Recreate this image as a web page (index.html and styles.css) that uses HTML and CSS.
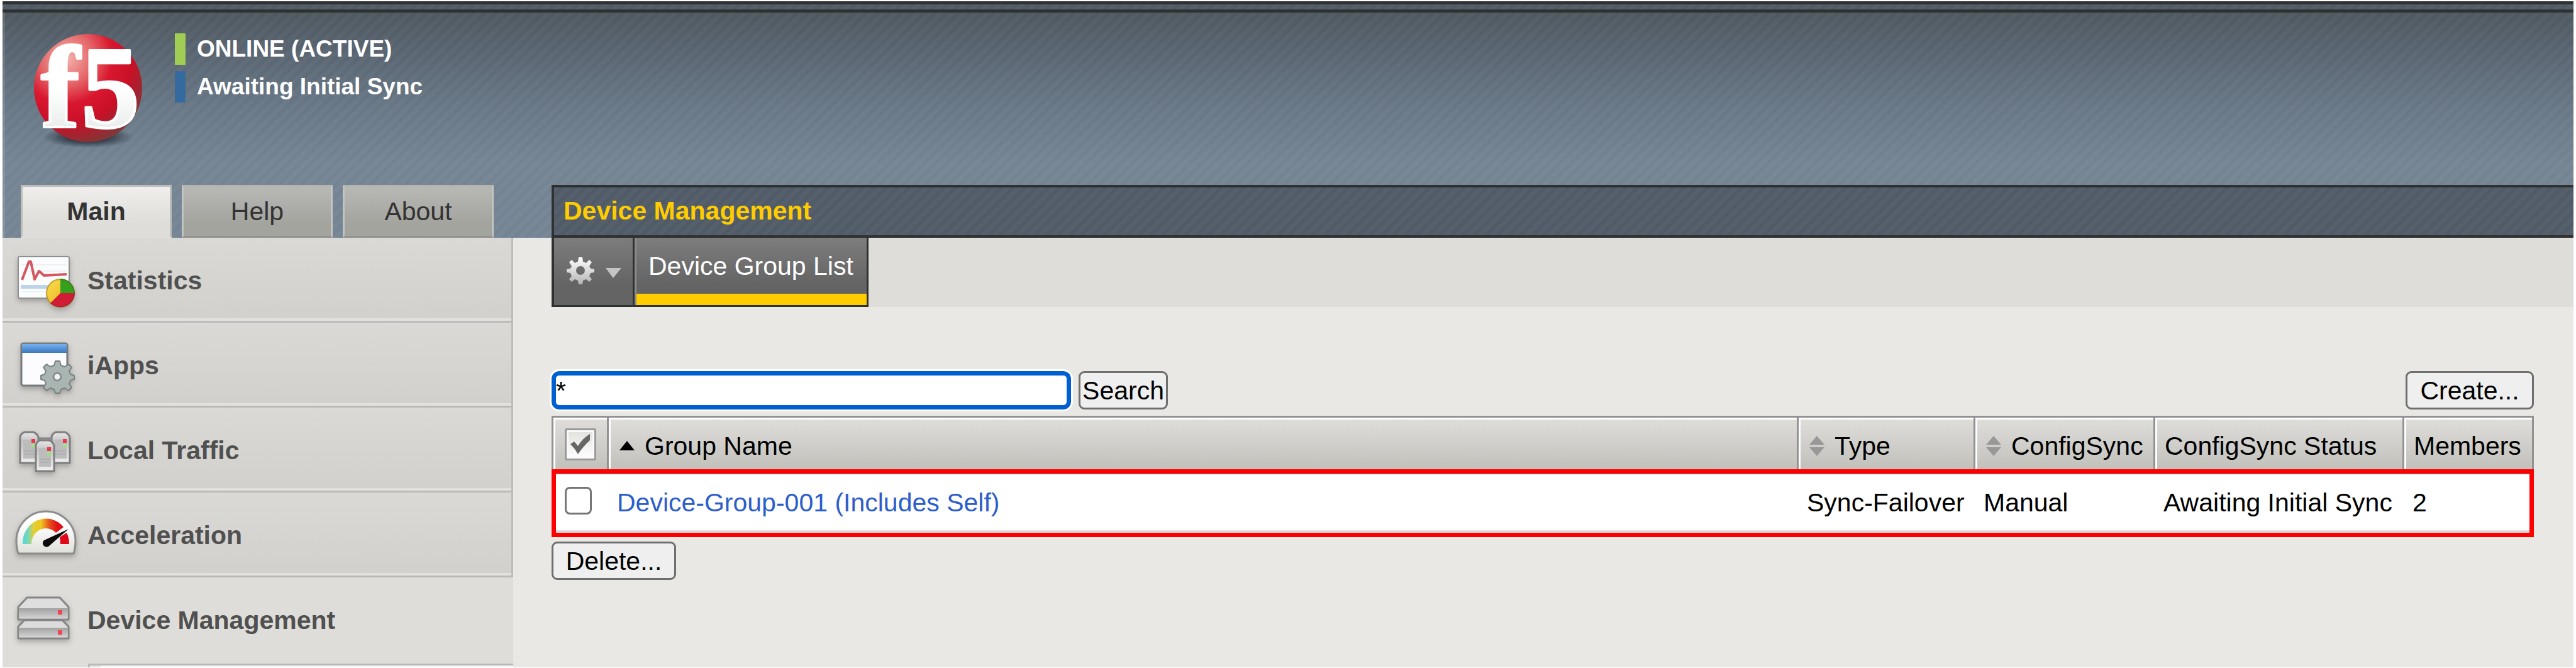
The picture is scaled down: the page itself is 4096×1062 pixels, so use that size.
FILE: index.html
```html
<!DOCTYPE html>
<html lang="en">
<head>
<meta charset="utf-8">
<title>Device Management</title>
<link rel="stylesheet" href="styles.css">
</head>
<body>
<div class="topline"></div>
<header class="banner">
  <div class="identity">
    <svg class="logo" viewBox="0 -24 180 220" role="img" aria-label="f5">
      <defs>
        <radialGradient id="ball" cx="0.3" cy="0.22" r="0.85">
          <stop offset="0" stop-color="#f3b5b0"/>
          <stop offset="0.28" stop-color="#e5686a"/>
          <stop offset="0.5" stop-color="#d9172f"/>
          <stop offset="0.72" stop-color="#c81027"/>
          <stop offset="1" stop-color="#7a3a3a"/>
        </radialGradient>
        <radialGradient id="ballshadow">
          <stop offset="0.4" stop-color="#26303a" stop-opacity="0.9"/>
          <stop offset="1" stop-color="#26303a" stop-opacity="0"/>
        </radialGradient>
        <linearGradient id="letters" x1="0" y1="0" x2="0" y2="1">
          <stop offset="0.5" stop-color="#ffffff"/>
          <stop offset="1" stop-color="#dfe3e3"/>
        </linearGradient>
      </defs>
      <ellipse cx="86" cy="165" rx="72" ry="17" fill="url(#ballshadow)"/>
      <circle cx="86" cy="87" r="86" fill="url(#ball)"/>
      <text class="logo-letter" x="11" y="149" font-size="186">f</text>
      <text class="logo-letter" x="75" y="149" font-size="186">5</text>
    </svg>
    <ul class="status">
      <li class="status-line online">ONLINE (ACTIVE)</li>
      <li class="status-line sync">Awaiting Initial Sync</li>
    </ul>
  </div>
  <div class="bannerfoot">
    <nav class="tabs">
      <button class="tab current" type="button">Main</button>
      <button class="tab" type="button">Help</button>
      <button class="tab" type="button">About</button>
    </nav>
    <h1 class="title">Device Management</h1>
  </div>
</header>
<div class="page">
  <nav class="sidebar">
    <a class="item" href="#statistics">
      <svg class="icon" viewBox="0 0 100 99" aria-hidden="true">
        <defs><linearGradient id="yel" x1="0" y1="0" x2="1" y2="1"><stop offset="0" stop-color="#fbe04a"/><stop offset="1" stop-color="#e8a820"/></linearGradient></defs>
        <rect x="5" y="12" width="81" height="66" rx="2" fill="#fbfcfd" stroke="#8f8f8f" stroke-width="2"/>
        <path d="M10 25H82M10 35H82M10 68H82" stroke="#eef1f4" stroke-width="2"/>
        <path d="M9 60H82" stroke="#bdd3e8" stroke-width="6"/>
        <path d="M11 49L22 20H25L31 48L38 35L46 42L82 40" fill="none" stroke="#d4575f" stroke-width="4" stroke-linejoin="round"/>
        <circle cx="72" cy="70" r="23" fill="url(#yel)"/>
        <path d="M72 70V47A23 23 0 0 1 95 70Z" fill="#35a01c"/>
        <path d="M72 70H95A23 23 0 0 1 56 86Z" fill="#d01c35"/>
        <circle cx="72" cy="70" r="22" fill="none" stroke="#5a3a20" stroke-opacity="0.35" stroke-width="2"/>
      </svg>
      <span>Statistics</span>
    </a>
    <a class="item" href="#iapps">
      <svg class="icon" viewBox="0 0 100 99" aria-hidden="true">
        <defs><linearGradient id="blu" x1="0" y1="0" x2="0" y2="1"><stop offset="0" stop-color="#73b2ee"/><stop offset="1" stop-color="#3b78bd"/></linearGradient></defs>
        <rect x="10" y="15" width="73" height="67" rx="3" fill="#fcfcfe" stroke="#77797c" stroke-width="3"/>
        <rect x="11" y="16" width="71" height="14" fill="url(#blu)"/>
        <path d="M64 43h7l2 7 6 2 6-4 5 5-4 6 2 5 6 2v6l-6 2-2 5 4 6-5 5-6-4-6 2-2 6h-7l-2-6-6-2-6 4-5-5 4-6-2-5-6-2v-6l6-2 2-5-4-6 5-5 6 4 6-2z" fill="#aab4b3" stroke="#788280" stroke-width="2" stroke-linejoin="round"/>
        <circle cx="67" cy="68" r="6" fill="#f2f3f5" stroke="#868f8e" stroke-width="3"/>
      </svg>
      <span>iApps</span>
    </a>
    <a class="item" href="#local-traffic">
      <svg class="icon" viewBox="0 0 100 99" aria-hidden="true">
        <defs>
          <linearGradient id="srv" x1="0" y1="0" x2="0" y2="1"><stop offset="0" stop-color="#e9e9e9"/><stop offset="0.3" stop-color="#c4c4c4"/><stop offset="1" stop-color="#efefef"/></linearGradient>
          <g id="tower">
            <path d="M2 51V10Q3 4 9 2H23Q29 4 31 10V51Z" fill="url(#srv)" stroke="#7f7f7f" stroke-width="3" stroke-linejoin="round"/>
            <path d="M7 14H26V44H7Z" fill="#bcbcbc"/>
            <path d="M8 32H25M8 37H25" stroke="#a4a4a4" stroke-width="1"/>
            <path d="M20 13h6v6h-6z" fill="#e8384c"/>
            <path d="M20 21h6v5h-6z" fill="#9be37e"/>
          </g>
        </defs>
        <use href="#tower" x="6" y="19"/>
        <use href="#tower" x="56" y="19"/>
        <path d="M38 31H58" stroke="#858585" stroke-width="3"/>
        <use href="#tower" x="31" y="32"/>
      </svg>
      <span>Local Traffic</span>
    </a>
    <a class="item" href="#acceleration">
      <svg class="icon" viewBox="0 0 100 99" aria-hidden="true">
        <defs>
          <linearGradient id="dial" x1="0" y1="0" x2="1" y2="0"><stop offset="0" stop-color="#4fd6d6"/><stop offset="0.14" stop-color="#7bd6b8"/><stop offset="0.26" stop-color="#e0d038"/><stop offset="0.45" stop-color="#efc61e"/><stop offset="0.65" stop-color="#e6521a"/><stop offset="0.85" stop-color="#e0101a"/></linearGradient>
          <linearGradient id="face" x1="0" y1="0" x2="0" y2="1"><stop offset="0.3" stop-color="#fff"/><stop offset="1" stop-color="#dfe0da"/></linearGradient>
        </defs>
        <path d="M5 79Q2 70 2 59A47 47 0 0 1 96 59Q96 70 93 79Z" fill="url(#face)" stroke="#8b8b8b" stroke-width="3" stroke-linejoin="round"/>
        <path d="M12 64A37 39 0 0 1 77 37L65 46A23 25 0 0 0 26 64Z" fill="url(#dial)"/>
        <path d="M71 53L82 46Q86 54 86 64H72Q72 58 71 53Z" fill="#e1081c"/>
        <path d="M85 40L54 67A6 6 0 1 1 46 58Z" fill="#0a0a0a"/>
      </svg>
      <span>Acceleration</span>
    </a>
    <a class="item open" href="#device-management">
      <svg class="icon" viewBox="0 0 100 99" aria-hidden="true">
        <defs>
          <linearGradient id="rack" x1="0" y1="0" x2="0" y2="1"><stop offset="0" stop-color="#a0a0a0"/><stop offset="0.4" stop-color="#b4b4b4"/><stop offset="1" stop-color="#cfcfcf"/></linearGradient>
        </defs>
        <path d="M5 60L15 50H75L85 60V79H5Z" fill="#dcdcdc" stroke="#858585" stroke-width="3" stroke-linejoin="round"/>
        <path d="M6 62H84V76H6Z" fill="url(#rack)"/>
        <path d="M5 29L19 14H71L85 29V49H5Z" fill="#dedede" stroke="#858585" stroke-width="3" stroke-linejoin="round"/>
        <path d="M6 31H84V46H6Z" fill="url(#rack)"/>
        <path d="M68 34h7v7h-7zM68 66h7v7h-7z" fill="#f04452"/>
      </svg>
      <span>Device Management</span>
    </a>
    <div class="submenu"></div>
  </nav>
  <main class="content">
    <div class="menubar">
      <button class="gear" type="button" aria-label="Options">
        <svg class="gearicon" viewBox="0 0 44 44" aria-hidden="true">
          <defs><linearGradient id="cog" x1="0" y1="0" x2="0" y2="1"><stop offset="0" stop-color="#ffffff"/><stop offset="1" stop-color="#b4b4b4"/></linearGradient></defs>
          <path fill="url(#cog)" fill-rule="evenodd" d="M19 1h6l1 7 5 2 5-5 4 4-4 6 2 4 6 1v5l-6 1-2 5 4 5-4 4-5-4-5 2-1 6h-6l-1-6-5-2-5 4-4-4 4-5-2-5-6-1v-5l6-1 2-4-4-6 4-4 5 5 5-2zM22 15a7 7 0 1 0 0 14a7 7 0 1 0 0-14z"/>
        </svg>
        <svg class="caret" viewBox="0 0 25 16" aria-hidden="true"><path d="M0 0H25L12 16Z" fill="#c4c4c4"/></svg>
      </button>
      <a class="menutab" href="#groups">Device Group List</a>
    </div>
    <form class="panel">
      <div class="tools">
        <input class="query" type="text" value="*" aria-label="Filter">
        <button class="btn tight" type="button">Search</button>
        <button class="btn create" type="button">Create...</button>
      </div>
      <table class="groups">
        <colgroup><col class="c-check"><col><col class="c-type"><col class="c-sync"><col class="c-status"><col class="c-members"></colgroup>
        <thead>
          <tr>
            <th class="pick"><button class="checkall" type="button" aria-label="Select all"><svg class="tick" viewBox="0 0 34 34" aria-hidden="true"><path d="M1 17L7 13L13 20Q20 8 32 1V11Q22 20 13 33Q8 24 1 17Z" fill="#666"/></svg></button></th>
            <th><span class="sortable"><svg class="sort" viewBox="0 0 24 32" aria-hidden="true"><path d="M0 23L12 8L24 23Z" fill="#000"/></svg>Group Name</span></th>
            <th><span class="sortable"><svg class="sort" viewBox="0 0 24 32" aria-hidden="true"><path d="M0 14L12 0L24 14ZM0 18H24L12 32Z" fill="#989898"/></svg>Type</span></th>
            <th><span class="sortable"><svg class="sort" viewBox="0 0 24 32" aria-hidden="true"><path d="M0 14L12 0L24 14ZM0 18H24L12 32Z" fill="#989898"/></svg>ConfigSync</span></th>
            <th>ConfigSync Status</th>
            <th>Members</th>
          </tr>
        </thead>
        <tbody>
          <tr>
            <td class="pick"><input class="box" type="checkbox" aria-label="Select Device-Group-001"></td>
            <td><a class="link" href="#group-001">Device-Group-001 (Includes Self)</a></td>
            <td>Sync-Failover</td>
            <td>Manual</td>
            <td>Awaiting Initial Sync</td>
            <td>2</td>
          </tr>
        </tbody>
      </table>
      <button class="btn delete" type="button">Delete...</button>
    </form>
  </main>
</div>
</body>
</html>
```

FILE: styles.css
```css
* {
  box-sizing: border-box;
}

:root {
  --stripes: repeating-linear-gradient(135deg, rgba(255, 255, 255, 0.03) 0 6px, transparent 7px 12px, rgba(255, 255, 255, 0.03) 13px);
  --side: 812px;
}

body {
  margin: 0;
  min-height: 100vh;
  padding: 2px 4px 1px;
  display: flex;
  flex-direction: column;
  background: #fff;
  color: #000;
  font-family: "Liberation Sans", Arial, sans-serif;
  font-size: 41px;
  line-height: 48px;
}

button,
input {
  margin: 0;
  font: inherit;
  color: inherit;
}

a {
  color: inherit;
  text-decoration: none;
}

/* Banner */

.topline {
  height: 13px;
  border-top: 5px solid #303132;
  background: var(--stripes), #505b65;
}

.banner {
  height: 363px;
  display: flex;
  flex-direction: column;
  justify-content: space-between;
  border-top: 5px solid #303132;
  background: var(--stripes), linear-gradient(#4e585f 0, #586470 60px, #687786 150px, #748493 240px, #748494 100%);
  box-shadow: inset 4px 0 rgba(255, 255, 255, 0.1);
}

.identity {
  display: flex;
  gap: 44px;
  padding: 9px 0 0 50px;
}

.logo {
  width: 180px;
  height: 220px;
}

.logo-letter {
  fill: url(#letters);
  stroke: #fff;
  stroke-width: 4px;
  stroke-linejoin: round;
  font-family: "Liberation Serif", "Times New Roman", serif;
  font-weight: bold;
}

.status {
  display: flex;
  flex-direction: column;
  gap: 10px;
  margin: 24px 0 0;
  padding: 0;
  list-style: none;
}

.status-line {
  height: 50px;
  padding-left: 18px;
  border-left: 17px solid;
  color: #fff;
  font-size: 37px;
  font-weight: bold;
  line-height: 50px;
}

.online {
  border-left-color: #a0ce54;
}

.sync {
  border-left-color: #356a9f;
}

.bannerfoot {
  display: grid;
  grid-template-columns: var(--side) 1fr;
  height: 84px;
}

.tabs {
  display: flex;
  gap: 16px;
  padding-left: 29px;
}

.tab {
  width: 240px;
  padding: 0;
  border: 3px solid #c3c3c0;
  border-bottom-color: #92938e;
  border-top-color: #b4b4b0;
  background: linear-gradient(#b8b8b5, #a3a49e 75%);
  color: #333;
}

.tab.current {
  border-color: #bdbdb9;
  border-bottom-color: #deddd9;
  background: linear-gradient(#efeeec, #deddd9 75%);
  font-weight: bold;
}

.title {
  margin: 0 0 0 61px;
  padding-left: 15px;
  border: 4px solid #2f3030;
  border-right: 0;
  background: var(--stripes), #505b67;
  color: #fc0;
  font-size: 41px;
  line-height: 75px;
}

/* Page body */

.page {
  flex: 1;
  display: grid;
  grid-template-columns: var(--side) 1fr;
  background: #e9e8e4;
}

.sidebar {
  display: flex;
  flex-direction: column;
  background: #deddd9;
  color: #505050;
  font-weight: bold;
}

.item {
  height: 135px;
  display: flex;
  align-items: center;
  gap: 15px;
  padding-left: 20px;
  background: linear-gradient(#dad9d5, #d1d0cc);
  box-shadow: inset -3px 0 #bbb, inset 0 -3px #bababa, inset 0 -7px #e2e1dd;
}

.item.open {
  background: none;
  box-shadow: none;
}

.icon {
  width: 100px;
  height: 99px;
  filter: drop-shadow(0 4px 4px rgba(0, 0, 0, 0.25));
}

.submenu {
  flex: 1;
  margin: 2px 0 0 136px;
  border-top: 3px solid #b8b8b7;
  border-left: 3px solid #bbb;
  background: linear-gradient(90deg, #e4e4e2 17px, #f7f7f7 17px);
}

.menubar {
  height: 110px;
  display: flex;
  margin-left: 61px;
  background: #deddd9;
}

.gear {
  width: 129px;
  display: flex;
  align-items: center;
  gap: 18px;
  padding: 0 0 3px 20px;
  border: solid #2f3030;
  border-width: 0 0 3px 4px;
  background: linear-gradient(#7d7d7d, #646464 70%);
}

.gearicon {
  width: 44px;
  height: 44px;
}

.caret {
  width: 25px;
  height: 16px;
  margin-top: 8px;
}

.menutab {
  width: 375px;
  padding-left: 22px;
  border: solid #2f3030;
  border-width: 0 3px 3px;
  background: linear-gradient(#7d7d7d, #646464 70%);
  box-shadow: inset 3px 0 #8c8c8c, inset 0 -18px #fc0;
  color: #fff;
  line-height: 90px;
}

.panel {
  padding: 102px 63px 0 61px;
}

.tools {
  display: flex;
  height: 61px;
  margin-bottom: 10px;
}

.query {
  width: 826px;
  margin-right: 12px;
  padding: 0;
  border: 7px solid #0060d0;
  border-radius: 12px;
  outline: 3px solid #fff;
  background: #fff;
}

.btn {
  height: 61px;
  padding: 0;
  border: 3px solid #6f6f6f;
  border-radius: 9px;
  background: #efefef;
  line-height: 54px;
}

.tight {
  width: 142px;
}

.create {
  width: 204px;
  margin-left: auto;
}

.delete {
  width: 198px;
  display: block;
  margin-top: 7px;
}

/* Group table */

.groups {
  width: 100%;
  table-layout: fixed;
  border-collapse: separate;
  border-spacing: 0;
}

.c-check {
  width: 88px;
}

.c-type {
  width: 281px;
}

.c-sync {
  width: 286px;
}

.c-status {
  width: 396px;
}

.c-members {
  width: 209px;
}

th {
  height: 85px;
  padding: 8px 0 0 15px;
  border: solid #929292;
  border-width: 3px 0 0 3px;
  background: linear-gradient(#dfdedb, #c1c0bb);
  box-shadow: inset 3px 3px #fff;
  font-weight: normal;
  text-align: left;
  white-space: nowrap;
}

th:last-child {
  border-right-width: 3px;
}

.sortable {
  display: flex;
  align-items: center;
  gap: 16px;
  padding-left: 2px;
}

.sort {
  width: 24px;
  height: 32px;
}

th.pick {
  padding: 2px 0 0 18px;
}

.checkall {
  width: 50px;
  height: 51px;
  display: grid;
  place-items: center;
  padding: 0;
  border: 3px solid #999;
  border-radius: 3px;
  background: linear-gradient(#e0e0dc, #fff);
  box-shadow: inset 0 0 0 3px #fafafa;
}

.tick {
  width: 34px;
  height: 34px;
}

td {
  height: 108px;
  padding: 0 0 3px 16px;
  border: solid #f00;
  border-width: 7px 0;
  background: #fff;
  box-shadow: inset 0 1px #999, inset 0 -4px #dcdadb;
  white-space: nowrap;
}

td:first-child {
  border-left-width: 7px;
}

td:last-child {
  border-right-width: 7px;
}

td.pick {
  padding: 0 0 8px 14px;
}

.box {
  width: 43px;
  height: 44px;
  display: block;
  appearance: none;
  border: 3px solid #767676;
  border-radius: 8px;
  background: #fff;
}

.link {
  color: #2c5ecb;
}
```
